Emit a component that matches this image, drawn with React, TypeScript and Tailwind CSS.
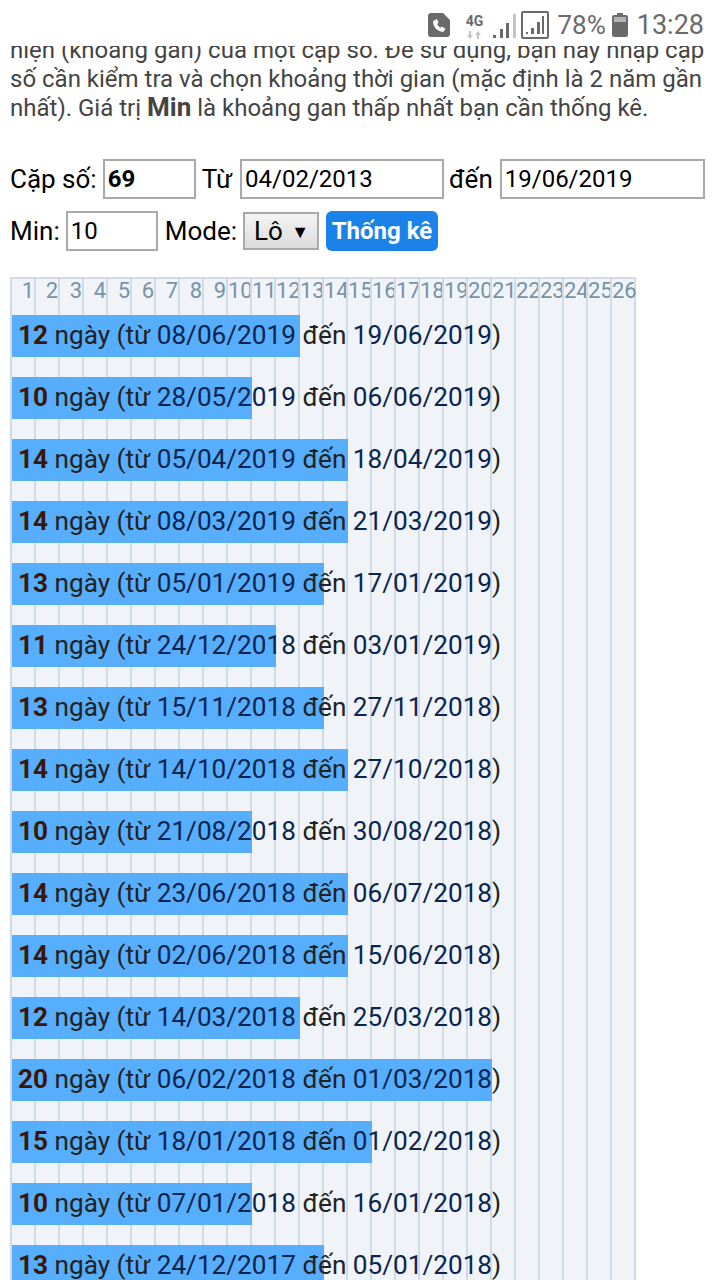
const rows = [
  ["12", "08/06/2019", "19/06/2019"],
  ["10", "28/05/2019", "06/06/2019"],
  ["14", "05/04/2019", "18/04/2019"],
  ["14", "08/03/2019", "21/03/2019"],
  ["13", "05/01/2019", "17/01/2019"],
  ["11", "24/12/2018", "03/01/2019"],
  ["13", "15/11/2018", "27/11/2018"],
  ["14", "14/10/2018", "27/10/2018"],
  ["10", "21/08/2018", "30/08/2018"],
  ["14", "23/06/2018", "06/07/2018"],
  ["14", "02/06/2018", "15/06/2018"],
  ["12", "14/03/2018", "25/03/2018"],
  ["20", "06/02/2018", "01/03/2018"],
  ["15", "18/01/2018", "01/02/2018"],
  ["10", "07/01/2018", "16/01/2018"],
  ["13", "24/12/2017", "05/01/2018"],
]

const columns = Array.from({ length: 26 }, (_, i) => i + 1)

function StatusBar() {
  return (
    <div className="absolute top-0 left-0 z-10 flex h-[46px] w-[720px] items-start justify-end bg-white pt-[11px] pr-[16px] text-[27px] leading-[28px] text-[#6a6a6a]">
      <svg width="22" height="24" viewBox="0 0 22 24" className="mt-[2px] mr-[14px]">
        <path d="M3 0h12l7 7v14a3 3 0 0 1-3 3H3a3 3 0 0 1-3-3V3a3 3 0 0 1 3-3z" fill="#6a6a6a" />
        <path d="M5 8c0 6 4 10 10 11l2.500-3-3.500-2.500-1.500 1.200c-1.500-.8-2.700-2-3.300-3.600l1.300-1.300L9 6z" fill="#fff" />
      </svg>
      <div className="mt-[3px] mr-[8px] flex w-[20px] flex-col items-center leading-none">
        <span className="text-[14px] font-bold">4G</span>
        <svg width="16" height="8" viewBox="0 0 16 8" className="mt-[3px]">
          <path d="M3 0h2v4h2L4 8 1 4h2zM11 8h2V4h2l-3-4-3 4h2z" fill="#c4c4c4" />
        </svg>
      </div>
      <svg width="25" height="24" viewBox="0 0 25 24" className="mt-[3px] mr-[4px]">
        <path d="M1 21h3v3H1zM8 15h3v9H8zM14 9h3v15h-3z" fill="#6a6a6a" />
        <path d="M21 0h3v24h-3z" fill="#c4c4c4" />
      </svg>
      <svg width="28" height="28" viewBox="0 0 28 28" className="mr-[8px]">
        <rect x="1" y="1" width="26" height="26" rx="1" fill="none" stroke="#6a6a6a" strokeWidth="2" />
        <path d="M5 21h2v2H5zM10 17h3v6h-3zM16 11h3v12h-3zM21 5h2v18h-2z" fill="#6a6a6a" />
      </svg>
      <span className="text-[26px]">78%</span>
      <svg width="16" height="24" viewBox="0 0 16 24" className="mt-[2px] mr-[9px] ml-[6px]">
        <path d="M5 0h6v2h3a2 2 0 0 1 2 2v18a2 2 0 0 1-2 2H2a2 2 0 0 1-2-2V4a2 2 0 0 1 2-2h3z" fill="#6a6a6a" />
        <path d="M2 4h12v5H2z" fill="#b5b5b5" />
      </svg>
      <span>13:28</span>
    </div>
  )
}

function Field({ value, className }: { value: string; className: string }) {
  return (
    <div className={`flex h-[40px] items-center border-2 border-[#a9a9a9] bg-white pl-[3px] text-[24px] text-black ${className}`}>
      {value}
    </div>
  )
}

export default function App() {
  return (
    <div className="relative h-[1280px] w-[720px] overflow-hidden bg-white font-['Roboto',sans-serif] text-[26px] text-black">
      <StatusBar />

      <p className="absolute top-[36px] left-[10px] w-[700px] text-[24px] leading-[29px] whitespace-nowrap text-[#444]">
        hiện (khoảng gan) của một cặp số. Để sử dụng, bạn hãy nhập cặp
        <br />
        số cần kiểm tra và chọn khoảng thời gian (mặc định là 2 năm gần
        <br />
        nhất). Giá trị <b className="text-[26px] leading-none">Min</b> là khoảng gan thấp nhất bạn cần thống kê.
      </p>

      <div className="flex flex-col gap-[12px] pt-[159px] pl-[10px]">
        <div className="flex items-center">
          <span className="mr-[6px]">Cặp số:</span>
          <Field value="69" className="w-[93px] font-bold" />
          <span className="mr-[8px] ml-[6px]">Từ</span>
          <Field value="04/02/2013" className="w-[204px]" />
          <span className="mr-[7px] ml-[5px]">đến</span>
          <Field value="19/06/2019" className="w-[205px]" />
        </div>
        <div className="flex items-center">
          <span className="mr-[6px]">Min:</span>
          <Field value="10" className="w-[92px]" />
          <span className="mr-[6px] ml-[7px]">Mode:</span>
          <div className="flex h-[38px] w-[76px] items-center justify-between border-2 border-[#a9a9a9] bg-gradient-to-b from-[#f4f4f4] to-[#dcdcdc] pr-[8px] pl-[9px]">
            <span>Lô</span>
            <span className="text-[18px]">▼</span>
          </div>
          <div className="ml-[7px] flex h-[40px] w-[112px] items-center justify-center rounded-[6px] bg-[#1a82e8] text-[24px] font-bold text-white">
            Thống kê
          </div>
        </div>
      </div>

      <div className="relative mt-[26px] ml-[10px] w-[626px] border-t-2 border-r-2 border-[#d0dbe5] bg-[#f0f4f8]">
        <div className="absolute inset-0 flex">
          {columns.map((n) => (
            <div key={n} className="h-[1100px] w-[24px] shrink-0 border-l-2 border-[#d0dbe5]">
              <div className="h-[36px] text-right text-[22px] leading-[24px] whitespace-nowrap text-[#7592a8]">
                {n}
              </div>
            </div>
          ))}
        </div>
        <div className="relative flex flex-col gap-[20px] pt-[36px] pl-[2px]">
          {rows.map(([days, from, to]) => (
            <div key={from} className="relative h-[42px] text-[26.160px] leading-[40px] whitespace-nowrap text-[#222]">
              <div className="absolute top-0 left-0 h-[42px] bg-[#57aefc]" style={{ width: Number(days) * 24 }} />
              <div className="relative pl-[6px]">
                <b className="text-[#3b1708]">{days}</b> ngày (từ <span className="text-[#0a2450]">{from}</span> đến{" "}
                <span className="text-[#0a2450]">{to}</span>)
              </div>
            </div>
          ))}
        </div>
      </div>
    </div>
  )
}
